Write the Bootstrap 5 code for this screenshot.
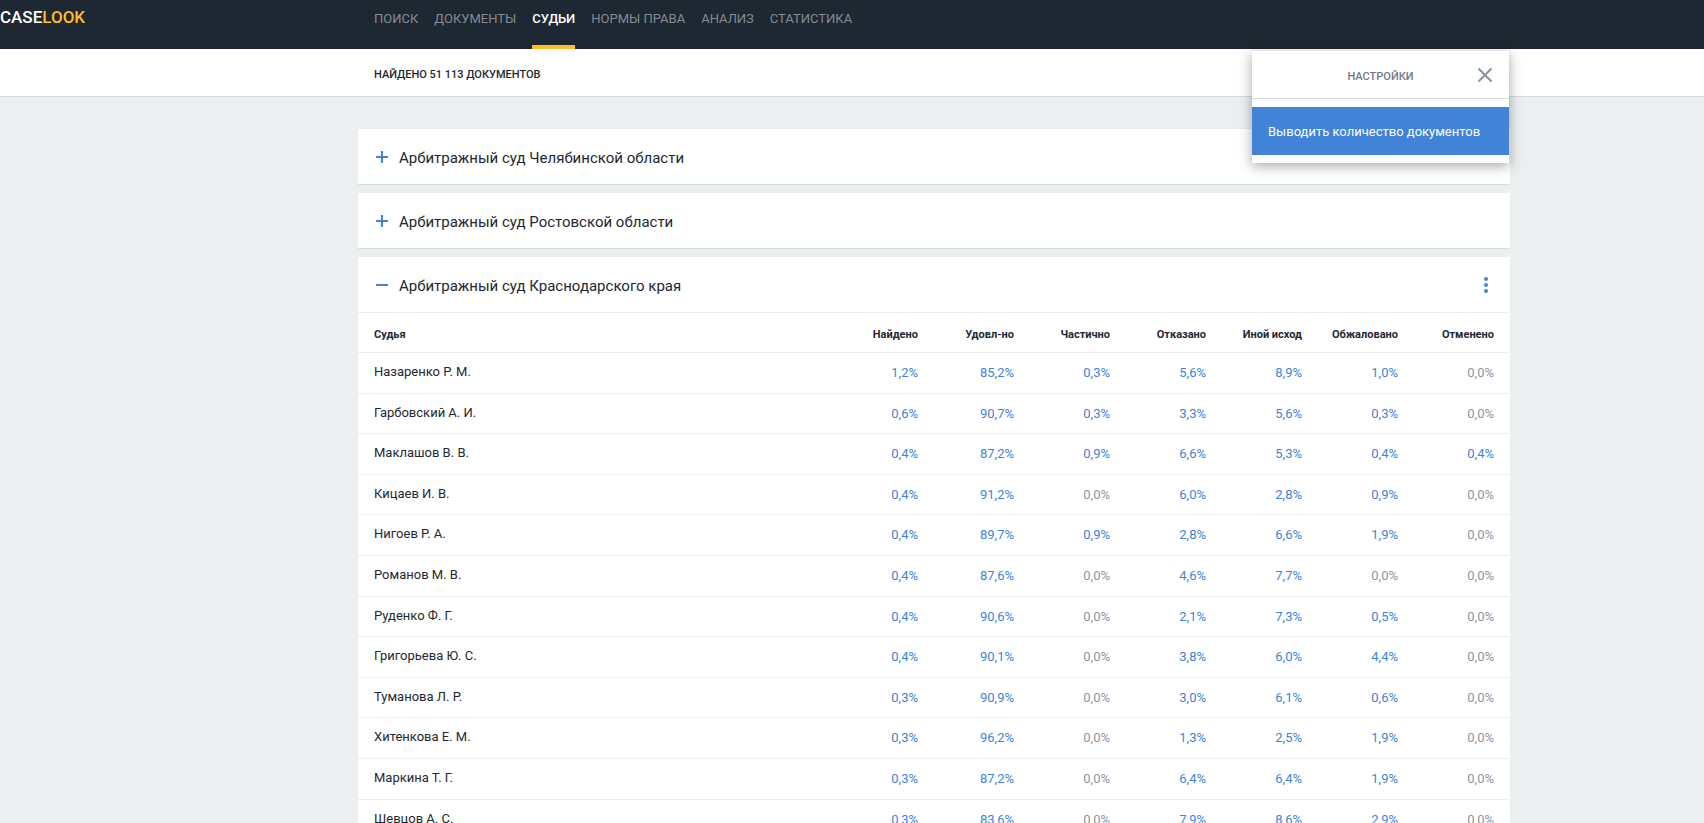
<!DOCTYPE html>
<html lang="ru">
<head>
<meta charset="utf-8">
<meta name="viewport" content="width=device-width, initial-scale=1">
<title>Caselook — Судьи</title>
<link href="https://cdn.jsdelivr.net/npm/bootstrap@5.3.0/dist/css/bootstrap.min.css" rel="stylesheet">
<style>
  :root { --ink: #1e2832; --blue: #4183d7; --muted: #8c969f; --line: #ebeff0; --edge: #d7dcdf; }
  body { font-family: Roboto, "Liberation Sans", sans-serif; font-size: 13px; line-height: 20px; color: var(--ink); background: #ebeff0; overflow: hidden; height: 100vh; }
  .plain { border: 0; background: none; padding: 0; display: block; }
  .topbar { background: var(--ink); height: 49px; }
  .brand { font-size: 17px; line-height: 34px; font-weight: 500; color: #fff; }
  .brand span { color: #ffbe26; }
  .page-wrap { max-width: 1316px; padding-left: 164px; }
  .site-nav { gap: 16px; height: 49px; padding-left: 16px; }
  .site-nav .nav-link { padding: 0; font-size: 13px; line-height: 37px; font-weight: 400; color: #848b91; white-space: nowrap; }
  .site-nav .nav-link.active { color: #fff; font-weight: 500; border-bottom: 4px solid #ffbe26; }
  .subbar { height: 48px; background: #fff; border-bottom: 1px solid var(--edge); }
  .subbar h1 { font-size: 11px; line-height: 52px; font-weight: 500; padding-left: 16px; }
  .settings { top: 2px; right: 1px; width: 257px; z-index: 10; background: #fff; box-shadow: 0 3px 12px rgba(0,0,0,.35); padding-bottom: 8px; }
  .settings-head { height: 48px; border-bottom: 1px solid var(--edge); margin-bottom: 8px; }
  .settings-head h2 { font-size: 11px; line-height: 52px; font-weight: 500; color: #6f7b87; }
  .settings-close { top: 16px; right: 16px; width: 16px; height: 16px; }
  .settings-item { background: var(--blue); color: #fff; height: 48px; padding: 2px 16px 0; }
  .court { background: #fff; border-bottom: 1px solid var(--edge); margin-bottom: 8px; }
  .court-head { height: 55px; padding: 0 18px; }
  .court-toggle { gap: 11px; font-size: 15px; line-height: 24px; color: var(--ink); }
  .court-toggle span { padding-top: 2px; }
  .court.open .court-head { height: 56px; border-bottom: 1px solid var(--line); }
  .judges { width: 100%; table-layout: fixed; border-collapse: separate; border-spacing: 0; }
  .judges th, .judges td { height: 41px; padding: 0 16px 0 0; text-align: right; border-bottom: 1px solid var(--line); white-space: nowrap; }
  .judges th { width: 96px; height: 40px; font-size: 11px; font-weight: 700; padding-top: 4px; }
  .judges th:first-child { width: auto; text-align: left; padding-left: 16px; }
  .judges td:first-child { text-align: left; padding: 0 0 2px 16px; }
  .judges td { color: var(--muted); }
  .judges tbody tr:nth-child(5n+2) td, .judges tbody tr:nth-child(5n+4) td { height: 40px; }
  .judges a { color: var(--blue); text-decoration: none; }
  .judges td:first-child a { color: var(--ink); }
</style>
</head>
<body>
<header class="topbar position-relative">
  <a class="brand position-absolute top-0 start-0 text-decoration-none" href="#">CASE<span>LOOK</span></a>
  <div class="page-wrap mx-auto">
    <nav class="site-nav d-flex" aria-label="Разделы">
      <a class="nav-link" href="#">ПОИСК</a>
      <a class="nav-link" href="#">ДОКУМЕНТЫ</a>
      <a class="nav-link active" href="#" aria-current="page">СУДЬИ</a>
      <a class="nav-link" href="#">НОРМЫ ПРАВА</a>
      <a class="nav-link" href="#">АНАЛИЗ</a>
      <a class="nav-link" href="#">СТАТИСТИКА</a>
    </nav>
  </div>
</header>

<div class="subbar">
  <div class="page-wrap mx-auto position-relative">
    <h1 class="mb-0">НАЙДЕНО 51 113 ДОКУМЕНТОВ</h1>
    <div class="settings position-absolute">
      <div class="settings-head position-relative text-center">
        <h2 class="mb-0">НАСТРОЙКИ</h2>
        <button type="button" class="plain settings-close position-absolute" aria-label="Закрыть">
          <svg class="d-block" width="16" height="16" viewBox="0 0 16 16" fill="none" stroke="#8793a1" stroke-width="2"><path d="M1.500 1.500l13 13M14.500 1.500l-13 13"/></svg>
        </button>
      </div>
      <button type="button" class="plain settings-item w-100 text-start">Выводить количество документов</button>
    </div>
  </div>
</div>

<main class="page-wrap mx-auto pt-4 mt-2">
  <section class="court">
    <div class="court-head d-flex align-items-center">
      <button type="button" class="plain court-toggle d-flex align-items-center" aria-expanded="false">
        <svg width="12" height="12" viewBox="0 0 12 12" fill="#4183d7"><path d="M0 5h12v2H0zM5 0h2v12H5z"/></svg>
        <span>Арбитражный суд Челябинской области</span>
      </button>
    </div>
  </section>
  <section class="court">
    <div class="court-head d-flex align-items-center">
      <button type="button" class="plain court-toggle d-flex align-items-center" aria-expanded="false">
        <svg width="12" height="12" viewBox="0 0 12 12" fill="#4183d7"><path d="M0 5h12v2H0zM5 0h2v12H5z"/></svg>
        <span>Арбитражный суд Ростовской области</span>
      </button>
    </div>
  </section>
  <section class="court open">
    <div class="court-head d-flex align-items-center justify-content-between">
      <button type="button" class="plain court-toggle d-flex align-items-center" aria-expanded="true">
        <svg width="12" height="12" viewBox="0 0 12 12" fill="#4183d7"><path d="M0 5h12v2H0z"/></svg>
        <span>Арбитражный суд Краснодарского края</span>
      </button>
      <button type="button" class="plain" aria-label="Меню">
        <svg class="d-block" width="12" height="16" viewBox="0 0 12 16" fill="#4183d7"><circle cx="6" cy="2" r="2"/><circle cx="6" cy="8" r="2"/><circle cx="6" cy="14" r="2"/></svg>
      </button>
    </div>
    <table class="judges">
      <thead>
        <tr><th>Судья</th><th>Найдено</th><th>Удовл-но</th><th>Частично</th><th>Отказано</th><th>Иной исход</th><th>Обжаловано</th><th>Отменено</th></tr>
      </thead>
      <tbody id="judges"></tbody>
    </table>
  </section>
</main>

<script src="https://cdn.jsdelivr.net/npm/bootstrap@5.3.0/dist/js/bootstrap.bundle.min.js"></script>
<script>
  const judges = [
    ['Назаренко Р. М.', '1,2', '85,2', '0,3', '5,6', '8,9', '1,0', '0,0'],
    ['Гарбовский А. И.', '0,6', '90,7', '0,3', '3,3', '5,6', '0,3', '0,0'],
    ['Маклашов В. В.', '0,4', '87,2', '0,9', '6,6', '5,3', '0,4', '0,4'],
    ['Кицаев И. В.', '0,4', '91,2', '0,0', '6,0', '2,8', '0,9', '0,0'],
    ['Нигоев Р. А.', '0,4', '89,7', '0,9', '2,8', '6,6', '1,9', '0,0'],
    ['Романов М. В.', '0,4', '87,6', '0,0', '4,6', '7,7', '0,0', '0,0'],
    ['Руденко Ф. Г.', '0,4', '90,6', '0,0', '2,1', '7,3', '0,5', '0,0'],
    ['Григорьева Ю. С.', '0,4', '90,1', '0,0', '3,8', '6,0', '4,4', '0,0'],
    ['Туманова Л. Р.', '0,3', '90,9', '0,0', '3,0', '6,1', '0,6', '0,0'],
    ['Хитенкова Е. М.', '0,3', '96,2', '0,0', '1,3', '2,5', '1,9', '0,0'],
    ['Маркина Т. Г.', '0,3', '87,2', '0,0', '6,4', '6,4', '1,9', '0,0'],
    ['Шевцов А. С.', '0,3', '83,6', '0,0', '7,9', '8,6', '2,9', '0,0']
  ];
  // Zero shares have no documents behind them, so they stay plain text.
  document.getElementById('judges').innerHTML = judges.map(([name, ...shares]) =>
    `<tr><td><a href="#">${name}</a></td>` +
    shares.map(v => v === '0,0' ? `<td>${v}%</td>` : `<td><a href="#">${v}%</a></td>`).join('') +
    '</tr>').join('');
</script>
</body>
</html>
